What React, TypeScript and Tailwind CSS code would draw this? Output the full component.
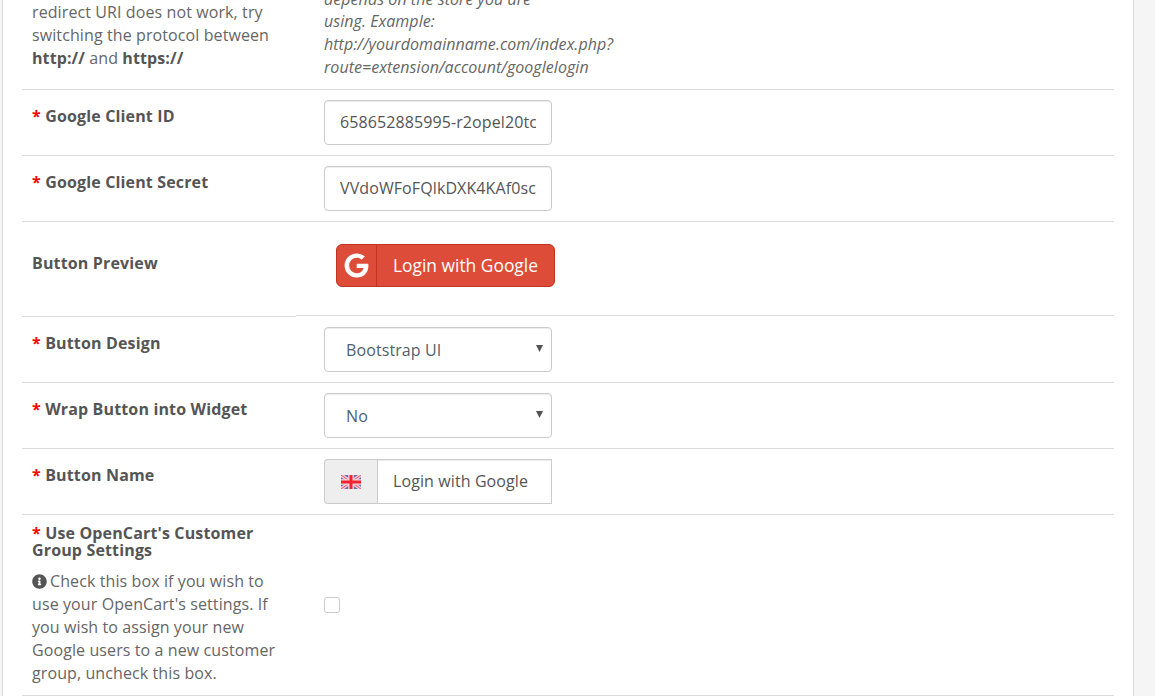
import React from "react";
import { FaGoogle, FaInfoCircle } from "react-icons/fa";

const inputCls =
  "block h-[45px] w-full border border-[#ccc] bg-white px-[15px] pb-[2px] text-[16px] tracking-[0.1px] text-[#555] shadow-[inset_0_1px_1px_rgba(0,0,0,0.075)] outline-none";

const selectCls =
  "block h-[45px] w-full appearance-none rounded-[4px] border border-[#ccc] bg-white pt-[1px] pr-[30px] pl-[21px] text-[16px] tracking-[0.1px] text-[#4f5f70] shadow-[inset_0_1px_1px_rgba(0,0,0,0.075)] outline-none";

const Req = () => <span className="text-[#f00]">* </span>;

const Label = ({ children }: { children: React.ReactNode }) => (
  <div className="w-[274px] shrink-0 px-[10px] pt-[18px] text-[16px] leading-[17px] font-bold tracking-[0.15px] text-[#555]">
    {children}
  </div>
);

const Row = ({ children }: { children: React.ReactNode }) => (
  <div className="flex h-[66px] border-b border-[#ddd]">{children}</div>
);

const Control = ({ children }: { children: React.ReactNode }) => (
  <div className="ml-[28px] w-[228px] pt-[10px]">{children}</div>
);

const Caret = () => (
  <svg width="7" height="7" viewBox="0 0 7 7" className="pointer-events-none absolute top-[18px] right-[9px]">
    <path d="M0 0H7L3.5 7Z" fill="#555" />
  </svg>
);

const UkFlag = () => (
  <svg width="20" height="14" viewBox="0 0 20 14" className="-ml-[1px] blur-[0.6px]">
    <rect width="20" height="14" fill="#6a70b4" />
    <path d="M0 0L20 14M20 0L0 14" stroke="#f0c8d4" strokeWidth="3.5" />
    <path d="M0 0L20 14M20 0L0 14" stroke="#ee5a6a" strokeWidth="1" />
    <path d="M10 0V14M0 7H20" stroke="#f7d5dc" strokeWidth="5.5" />
    <path d="M10 0V14M0 7H20" stroke="#f4212f" strokeWidth="3" />
  </svg>
);

export default function App() {
  return (
    <div className="h-[696px] overflow-hidden bg-[#f5f5f5] font-['Open_Sans',sans-serif] text-[16px] leading-[22.857px] tracking-[0.1px] text-[#666]">
      <div className="ml-[2px] h-[720px] w-[1132px] border-x border-[#ddd] bg-white pr-[19px] pl-[19px]">
        {/* top row, scrolled partly out of view */}
        <div className="-mt-[14px] flex h-[104px] items-end border-b border-[#ddd]">
          <div className="w-[274px] shrink-0 px-[10px] pb-[19px]">
            redirect URI does not work, try switching the protocol between{" "}
            <b className="text-[#555]">http://</b> and <b className="text-[#555]">https://</b>
          </div>
          <div className="ml-[28px] w-[228px] pb-[10px] italic tracking-[0.05px]">
            depends on the store you are using. Example: http://yourdomainname.com/index.php?
            route=extension/account/googlelogin
          </div>
        </div>

        <Row>
          <Label>
            <Req />
            Google Client ID
          </Label>
          <Control>
            <input readOnly className={inputCls + " rounded-[4px]"} value="658652885995-r2opel20tcm4n8q.apps.googleusercontent.com" />
          </Control>
        </Row>

        <Row>
          <Label>
            <Req />
            Google Client Secret
          </Label>
          <Control>
            <input readOnly className={inputCls + " rounded-[4px]"} value="VVdoWFoFQlkDXK4KAf0scLm2PqTz" />
          </Control>
        </Row>

        {/* preview row: left cell's bottom line sits 1px lower than the right one */}
        <div className="flex h-[95px] items-start">
          <div className="h-[95px] w-[274px] shrink-0 border-b border-[#ddd] px-[10px] pt-[33px] leading-[17px] font-bold tracking-[0.15px] text-[#555]">
            Button Preview
          </div>
          <div className="h-[94px] flex-1 border-b border-[#ddd] pt-[22px] pl-[40px]">
            <div className="flex h-[43px] w-[219px] items-center rounded-[6px] border border-[#c23321] bg-[#dd4b39] text-[17.4px] tracking-normal text-white">
              <div className="flex h-full w-[40px] items-center justify-center border-r border-[#c23321]">
                <FaGoogle className="h-[25px] w-[25px]" />
              </div>
              <span className="ml-[16px]">Login with Google</span>
            </div>
          </div>
        </div>

        <Row>
          <Label>
            <Req />
            Button Design
          </Label>
          <Control>
            <div className="relative">
              <select defaultValue="bootstrap" className={selectCls}>
                <option value="bootstrap">Bootstrap UI</option>
              </select>
              <Caret />
            </div>
          </Control>
        </Row>

        <Row>
          <Label>
            <Req />
            Wrap Button into Widget
          </Label>
          <Control>
            <div className="relative">
              <select defaultValue="no" className={selectCls}>
                <option value="no">No</option>
              </select>
              <Caret />
            </div>
          </Control>
        </Row>

        <Row>
          <Label>
            <Req />
            Button Name
          </Label>
          <Control>
            <div className="flex h-[45px]">
              <div className="flex w-[53px] shrink-0 items-center justify-center rounded-l-[4px] border border-r-0 border-[#ccc] bg-[#eee]">
                <UkFlag />
              </div>
              <input readOnly className={inputCls} value="Login with Google" />
            </div>
          </Control>
        </Row>

        <div className="flex h-[181px] border-b border-[#ddd]">
          <div className="w-[274px] shrink-0 px-[10px] pt-[10px]">
            <div className="leading-[17px] font-bold tracking-[0.15px] text-[#555]">
              <Req />
              Use OpenCart's Customer Group Settings
            </div>
            <div className="mt-[11px] leading-[23px]">
              <FaInfoCircle className="mr-[3px] inline-block h-[15px] w-[15px] -translate-y-[1px] text-[#555]" />
              Check this box if you wish to use your OpenCart's settings. If you wish to assign your new Google users to a new customer group, uncheck this box.
            </div>
          </div>
          <div className="ml-[28px] flex items-center">
            <div className="h-[16px] w-[16px] rounded-[3px] border border-[#ccc] bg-white" />
          </div>
        </div>
      </div>
    </div>
  );
}
